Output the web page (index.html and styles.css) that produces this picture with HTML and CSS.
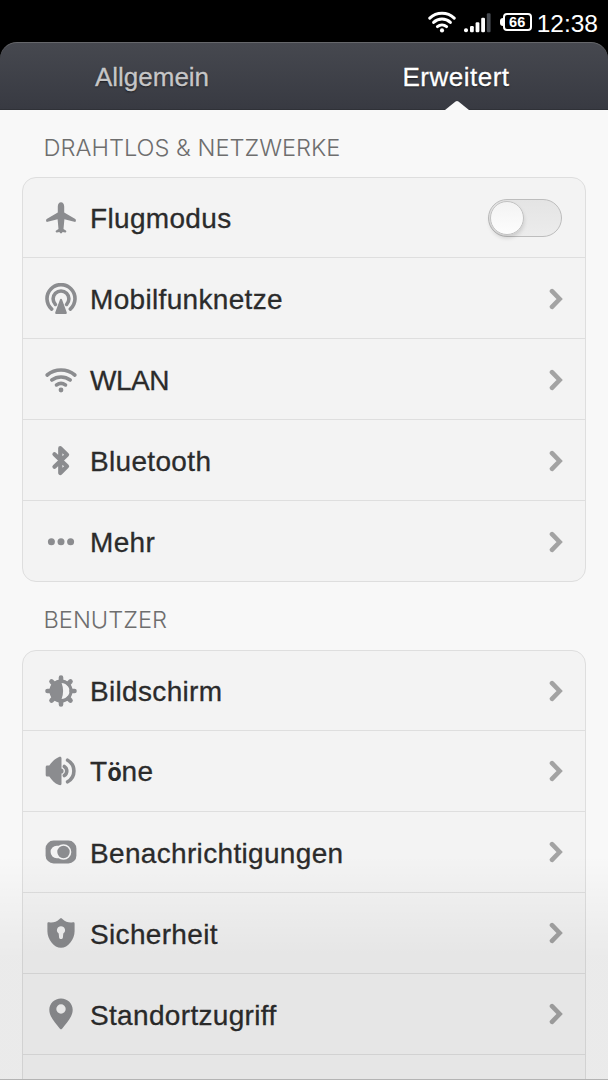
FILE: index.html
```
<!DOCTYPE html>
<html lang="de">
<head>
  <meta charset="UTF-8">
  <title>Einstellungen</title>
  <link rel="stylesheet" href="styles.css">
</head>
<body>
  <svg class="defs">
    <symbol id="chevron" viewBox="0 0 14 22">
      <path d="M3 3.200l7.600 7.800-7.600 7.800" fill="none" stroke="currentColor" stroke-width="4.600" stroke-linecap="round" stroke-linejoin="miter"/>
    </symbol>
  </svg>

  <div class="screen">
    <div class="status-bar">
      <svg class="status-wifi" viewBox="0 0 28 22">
        <g fill="none" stroke="#fff" stroke-width="3" stroke-linecap="round">
          <path d="M1.8 7.2a17.6 17.6 0 0 1 24.4 0"/>
          <path d="M5.6 11.4a12.4 12.4 0 0 1 16.8 0"/>
          <path d="M9.4 15.6a7 7 0 0 1 9.2 0"/>
        </g>
        <circle cx="14" cy="19.4" r="2.1" fill="#fff"/>
      </svg>
      <svg class="status-signal" viewBox="0 0 27 20">
        <g fill="#fff">
          <rect x="0" y="15.3" width="4" height="4" rx="1.8"/>
          <rect x="6" y="13" width="3.8" height="6.3" rx="1.2"/>
          <rect x="11.6" y="9.3" width="3.8" height="10" rx="1.2"/>
          <rect x="17.2" y="4.8" width="3.8" height="14.5" rx="1.2"/>
        </g>
        <rect x="22.8" y="0.3" width="3.8" height="19" rx="1.2" fill="#474b51"/>
      </svg>
      <div class="battery"><span class="battery-level">66</span></div>
      <span class="clock">12:38</span>
    </div>

    <div class="tabs">
      <div class="tab">Allgemein</div>
      <div class="tab active">Erweitert</div>
    </div>

    <div class="content">
      <h2 class="section-title">DRAHTLOS &amp; NETZWERKE</h2>
      <div class="card">
        <div class="row">
          <svg class="icon" viewBox="0 0 32 32">
            <path d="M16 .2c1.9 0 3.200 1.900 3.200 4.200v6.200l10.700 6.200c1 .6 1.200 1.500.9 2.400-.2.700-.8.800-1.500.6l-9.900-2.500-.9 9.800 2.300 1.400c.5.400.7 1 .3 1.600-.2.400-.6.400-1 .3l-2.500-.5-.8 1.300h-1.600l-.8-1.300-2.500.5c-.4.100-.8.100-1-.3-.4-.6-.2-1.200.3-1.600l2.300-1.400-.9-9.800-9.900 2.500c-.7.200-1.300.100-1.500-.6-.3-.9-.1-1.800.9-2.400l10.700-6.200V4.400c0-2.300 1.300-4.200 3.200-4.200z"/>
          </svg>
          <span class="label">Flugmodus</span>
          <span class="switch"><span class="knob"></span></span>
        </div>
        <div class="row">
          <svg class="icon" viewBox="0 0 32 32">
            <g class="line">
              <path d="M6.700 26.100a14 14 0 1 1 18.600 0"/>
              <path d="M10.400 21.400a7.900 7.900 0 1 1 11.200 0"/>
            </g>
            <path d="M16 15.800c.6 0 .9.400 1.100.9l4.600 12.500c.4 1.100-.2 1.900-1.200 1.900h-9c-1 0-1.600-.8-1.200-1.900l4.600-12.500c.2-.5.5-.9 1.100-.9z"/>
          </svg>
          <span class="label">Mobilfunknetze</span>
          <svg class="chevron"><use href="#chevron"/></svg>
        </div>
        <div class="row">
          <svg class="icon" viewBox="0 0 32 32">
            <g class="line">
              <path d="M2.200 11a21.500 21.500 0 0 1 27.600 0"/>
              <path d="M6.800 16a15.500 15.500 0 0 1 18.400 0"/>
              <path d="M11.500 20.900a8 8 0 0 1 9 0"/>
            </g>
            <circle cx="16" cy="26" r="2.400"/>
          </svg>
          <span class="label wlan">WLAN</span>
          <svg class="chevron"><use href="#chevron"/></svg>
        </div>
        <div class="row">
          <svg class="icon" viewBox="0 0 32 32">
            <path class="line bold" d="M9.500 9.200l12.500 12L15.300 28V3.200L22 9.800 9.500 21.800"/>
          </svg>
          <span class="label">Bluetooth</span>
          <svg class="chevron"><use href="#chevron"/></svg>
        </div>
        <div class="row">
          <svg class="icon" viewBox="0 0 32 32">
            <circle cx="6.400" cy="15.700" r="3.500"/>
            <circle cx="16" cy="15.700" r="3.500"/>
            <circle cx="25.600" cy="15.700" r="3.500"/>
          </svg>
          <span class="label">Mehr</span>
          <svg class="chevron"><use href="#chevron"/></svg>
        </div>
      </div>

      <h2 class="section-title">BENUTZER</h2>
      <div class="card">
        <div class="row">
          <svg class="icon" viewBox="0 0 32 32">
            <path fill-rule="evenodd" d="M16 4.400a11.600 11.600 0 1 0 0 23.200 11.600 11.600 0 0 0 0-23.200zM16.600 8c4.400.2 8 3.800 8 8s-3.600 7.800-8 8c2-5 2-11 0-16z"/>
            <g stroke="currentColor" stroke-width="4.600" stroke-linecap="round">
              <path d="M16 2.500v3M16 26.500v3M2.500 16h3M26.500 16h3M6.500 6.500l2 2M23.500 23.500l2 2M6.500 25.500l2-2M23.500 8.500l2-2"/>
            </g>
          </svg>
          <span class="label">Bildschirm</span>
          <svg class="chevron"><use href="#chevron"/></svg>
        </div>
        <div class="row">
          <svg class="icon" viewBox="0 0 32 32">
            <path d="M13.500 2.200c2-.8 3-.4 3 1.200v25.200c0 1.600-1 2-3 1.200C9.800 28.300 6.600 25 4.300 21.400H2.200c-.9 0-1.500-.6-1.500-1.500v-7.800c0-.9.6-1.500 1.500-1.500h2.100C6.600 7 9.800 3.700 13.500 2.200z"/>
            <path d="M16 13.400a2.600 2.600 0 0 1 0 5.200z"/>
            <g class="line">
              <path d="M19.300 11.400a5.500 5.500 0 0 1 0 9.200"/>
              <path d="M22.600 5.200a12.400 12.400 0 0 1 0 21.600"/>
            </g>
          </svg>
          <span class="label">T<span class="umlaut">ö</span>ne</span>
          <svg class="chevron"><use href="#chevron"/></svg>
        </div>
        <div class="row">
          <svg class="icon" viewBox="0 0 32 32">
            <rect x=".6" y="4.600" width="30.800" height="22.800" rx="8"/>
            <path fill="#f3f3f3" d="M11.800 9.800h7a6.200 6.200 0 0 1 0 12.400h-7a6.200 6.200 0 0 1 0-12.400z"/>
            <circle cx="18.500" cy="16" r="7" stroke="#f3f3f3" stroke-width="1.600"/>
          </svg>
          <span class="label">Benachrichtigungen</span>
          <svg class="chevron"><use href="#chevron"/></svg>
        </div>
        <div class="row">
          <svg class="icon" viewBox="0 0 32 32">
            <path fill-rule="evenodd" d="M16 1.200c.8 0 1.200.5 1.700 1 2.900 2.700 6.200 3.700 10.200 3.100 1.100-.2 1.700.3 1.700 1.400v7.500c0 8.200-6.600 16.600-13.600 16.600S2.400 22.400 2.400 14.200V6.700c0-1.100.6-1.600 1.700-1.400 4 .6 7.300-.4 10.200-3.100.5-.5.900-1 1.700-1zM16 9.200a4 4 0 0 0-2.300 7.300l.4 4c.3 2 3.500 2 3.800 0l.4-4A4 4 0 0 0 16 9.200z"/>
          </svg>
          <span class="label">Sicherheit</span>
          <svg class="chevron"><use href="#chevron"/></svg>
        </div>
        <div class="row">
          <svg class="icon" viewBox="0 0 32 32">
            <path fill-rule="evenodd" d="M16 .5C9.400.5 4.300 5.500 4.300 11.800c0 7.200 6.200 13 10.400 18.800.8 1.100 1.800 1.100 2.600 0 4.200-5.800 10.400-11.600 10.400-18.800C27.700 5.500 22.600.500 16 .500zM16 6.300a4.700 4.700 0 1 1 0 9.400 4.700 4.700 0 0 1 0-9.400z"/>
          </svg>
          <span class="label">Standortzugriff</span>
          <svg class="chevron"><use href="#chevron"/></svg>
        </div>
        <div class="row"></div>
      </div>
    </div>
    <div class="fade"></div>
  </div>
</body>
</html>
```

FILE: styles.css
```
* {
  box-sizing: border-box;
}

body {
  margin: 0;
  background: #000;
  font-family: "Liberation Sans", Arial, sans-serif;
}

.defs {
  display: none;
}

.screen {
  position: relative;
  display: flex;
  flex-direction: column;
  width: 608px;
  height: 1080px;
  overflow: hidden;
}

/* status bar */
.status-bar {
  display: flex;
  flex: none;
  align-items: flex-start;
  justify-content: flex-end;
  height: 42px;
  padding: 10px 10px 0 0;
  color: #fff;
}

.status-wifi {
  width: 28px;
  height: 22px;
  margin: 1px 8px 0 0;
}

.status-signal {
  width: 27px;
  height: 20px;
  margin: 3px 9px 0 0;
}

.battery {
  position: relative;
  display: flex;
  align-items: center;
  justify-content: center;
  width: 29px;
  height: 18px;
  margin: 3px 5px 0 3px;
  border: 2px solid #fff;
  border-radius: 4px;
}

.battery::before {
  content: "";
  position: absolute;
  left: -5px;
  width: 4px;
  height: 8px;
  border-radius: 3px 0 0 3px;
  background: #fff;
}

.battery-level {
  font-size: 14.5px;
  font-weight: bold;
  line-height: 14px;
}

.clock {
  margin-top: 1px;
  font-size: 24.5px;
  line-height: 25px;
}

/* tabs */
.tabs {
  display: flex;
  flex: none;
  height: 68px;
  border-top: 1px solid #66676b;
  border-bottom: 1px solid #2f3137;
  border-radius: 17px 17px 0 0;
  background: linear-gradient(#46484f, #383a42);
}

.tab {
  position: relative;
  flex: 1;
  color: #c6c6c7;
  font-size: 26px;
  line-height: 68px;
  text-align: center;
  text-shadow: 0 1px 2px rgba(0, 0, 0, 0.6);
  -webkit-text-stroke: 0.3px;
}

.tab.active {
  color: #fff;
  letter-spacing: 0.5px;
}

.tab.active::after {
  content: "";
  position: absolute;
  bottom: -1px;
  left: 50%;
  width: 24px;
  height: 9px;
  margin-left: -11px;
  background: #fafafa;
  clip-path: polygon(0 100%, 44% 6%, 50% 0, 56% 6%, 100% 100%);
}

/* lists */
.content {
  flex: 1;
  padding: 0 22px;
  background: #f8f8f8;
}

.section-title {
  height: 67px;
  margin: 0;
  padding: 4px 0 0 20.5px;
  color: #6e6e6e;
  font-family: Inter, "Liberation Sans", sans-serif;
  font-size: 22.5px;
  font-weight: 300;
  line-height: 68px;
  white-space: nowrap;
  transform: scaleX(1.05);
  transform-origin: left;
}

.card {
  border: 1px solid #dedede;
  border-radius: 14px;
  background: #f3f3f3;
}

.card + .section-title {
  height: 68px;
}

.row {
  display: flex;
  align-items: center;
  height: 81px;
  padding: 0 22px;
  border-bottom: 1px solid #dedede;
}

.card:first-of-type .row {
  padding-top: 1px;
}

.row:first-child,
.card:first-of-type .row:last-child {
  height: 80px;
}

.row:last-child {
  border-bottom: none;
}

.icon {
  flex: none;
  width: 32px;
  height: 32px;
  color: #8b8c8f;
  fill: currentColor;
}

.icon .line {
  fill: none;
  stroke: currentColor;
  stroke-width: 3.6;
  stroke-linecap: round;
  stroke-linejoin: round;
}

.icon .line.bold {
  stroke-width: 4.3;
}

.label {
  flex: 1;
  padding: 3px 0 0 13px;
  color: #2b2b2b;
  font-size: 28px;
  line-height: 32px;
  letter-spacing: 0.33px;
  white-space: nowrap;
  -webkit-text-stroke: 0.3px;
}

.row:first-child .label {
  padding-top: 2px;
}

.label.wlan {
  letter-spacing: -0.5px;
}

.umlaut {
  font-family: Roboto, sans-serif;
  font-size: 25px;
  font-weight: bold;
  letter-spacing: 0;
  -webkit-text-stroke: 0;
}

.chevron {
  flex: none;
  width: 14px;
  height: 22px;
  color: #a3a3a3;
}

.switch {
  width: 74px;
  height: 38px;
  margin-right: 1px;
  padding: 1px;
  border: 1px solid #bdbdbd;
  border-radius: 19px;
  background: linear-gradient(#e4e4e4, #ececec);
}

.knob {
  display: block;
  width: 34px;
  height: 34px;
  border: 1px solid #c2c2c2;
  border-radius: 50%;
  background: linear-gradient(#f3f3f3, #fdfdfd);
  box-shadow: 0 3px 4px rgba(0, 0, 0, 0.14);
}

/* darkening towards the bottom edge */
.fade {
  position: absolute;
  right: 0;
  bottom: 0;
  left: 0;
  height: 225px;
  border-bottom: 1px solid #b4b4b4;
  background: linear-gradient(transparent, rgba(0, 0, 0, 0.055) 45%);
}
```
